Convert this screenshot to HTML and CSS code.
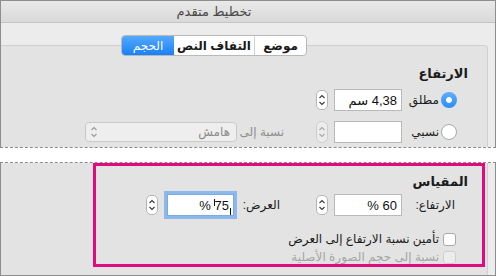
FILE: index.html
```html
<!DOCTYPE html>
<html lang="ar" dir="rtl">
<head>
<meta charset="utf-8">
<title>تخطيط متقدم</title>
<link rel="stylesheet" href="styles.css">
</head>
<body>
<div class="win-top">
  <div class="titlebar"><span class="title">تخطيط متقدم</span></div>
  <div class="content">
    <div class="tabs-wrap">
      <div class="tabs">
        <span class="tab tab-pos">موضع</span>
        <span class="tab tab-wrap">التفاف النص</span>
        <span class="tab tab-size active">الحجم</span>
      </div>
    </div>
    <div class="panel panel-top">
      <div class="heading">الارتفاع</div>
      <div class="row">
        <span class="radio on"></span>
        <span class="lbl">مطلق</span>
        <span class="field">4,38 سم</span>
        <span class="stepper"><svg width="12" height="20" viewBox="0 0 12 20"><rect x="0.5" y="0.5" width="11" height="19" rx="4.5" fill="#fff" stroke="#b5b5b5"/><path d="M3.5 8 L6 5.5 L8.5 8 M3.5 12 L6 14.5 L8.5 12" fill="none" stroke="#3a3a3a" stroke-width="1.1"/></svg></span>
      </div>
      <div class="row">
        <span class="radio"></span>
        <span class="lbl">نسبي</span>
        <span class="field"></span>
        <span class="stepper"><svg width="12" height="22" viewBox="0 0 12 22"><rect x="0.5" y="0.5" width="11" height="21" rx="5" fill="#ececec" stroke="#cdcdcd"/><path d="M3.5 9 L6 6.5 L8.5 9 M3.5 13 L6 15.5 L8.5 13" fill="none" stroke="#a8a8a8" stroke-width="1.1"/></svg></span>
        <span class="rel">نسبة إلى</span>
        <span class="select"><span class="sel-text">هامش</span><svg width="8" height="12" viewBox="0 0 8 12"><path d="M1.5 4 L4 1.5 L6.5 4 M1.5 8 L4 10.5 L6.5 8" fill="none" stroke="#9a9a9a" stroke-width="1.1"/></svg></span>
      </div>
    </div>
  </div>
</div>
<div class="tear"></div>
<div class="win-bottom">
  <div class="panel panel-bottom">
    <div class="heading heading-2">المقياس</div>
    <div class="row row-scale">
      <span class="lbl lbl-wide">الارتفاع:</span>
      <span class="field">60 %</span>
      <span class="stepper"><svg width="12" height="20" viewBox="0 0 12 20"><rect x="0.5" y="0.5" width="11" height="19" rx="4.5" fill="#fff" stroke="#b5b5b5"/><path d="M3.5 8 L6 5.5 L8.5 8 M3.5 12 L6 14.5 L8.5 12" fill="none" stroke="#3a3a3a" stroke-width="1.1"/></svg></span>
      <span class="lbl lbl-w">العرض:</span>
      <span class="field focus"><span class="val"><span class="num">75</span> %</span></span>
      <span class="stepper"><svg width="12" height="20" viewBox="0 0 12 20"><rect x="0.5" y="0.5" width="11" height="19" rx="4.5" fill="#fff" stroke="#b5b5b5"/><path d="M3.5 8 L6 5.5 L8.5 8 M3.5 12 L6 14.5 L8.5 12" fill="none" stroke="#3a3a3a" stroke-width="1.1"/></svg></span>
    </div>
    <div class="check-row">
      <span class="checkbox"></span>
      <span class="check-lbl">تأمين نسبة الارتفاع إلى العرض</span>
    </div>
    <div class="check-row disabled">
      <span class="checkbox"></span>
      <span class="check-lbl">نسبة إلى حجم الصورة الأصلية</span>
    </div>
  </div>
  <div class="highlight"></div>
</div>
</body>
</html>
```
FILE: styles.css
```css
* { box-sizing: border-box; }
html, body { margin: 0; padding: 0; }
body {
  width: 496px;
  height: 276px;
  overflow: hidden;
  background: #ececec;
  font-family: "Liberation Sans", "DejaVu Sans", sans-serif;
  font-size: 12px;
  color: #1b1b1b;
}

.win-top {
  height: 147px;
  border: 1px solid #8e8e8e;
  border-bottom: 0;
  background: #ececec;
  overflow: hidden;
}
.titlebar {
  height: 22px;
  border-bottom: 1px solid #c4c4c4;
  background: linear-gradient(#e9e9e9, #d9d9d9);
  display: flex;
  align-items: center;
  justify-content: center;
  padding-right: 68px;
  color: #4a4a4a;
  font-size: 13px;
}
.content { padding-top: 12px; }
.tabs-wrap {
  display: flex;
  justify-content: center;
  padding-right: 68px;
  position: relative;
  z-index: 1;
  margin-bottom: -11px;
}
.tabs {
  display: flex;
  height: 21px;
  border: 1px solid #b8b8b8;
  border-radius: 4px;
  background: #fff;
  overflow: hidden;
}
.tab {
  display: flex;
  align-items: center;
  justify-content: center;
  font-weight: bold;
  font-size: 12px;
  color: #1a1a1a;
}
.tab-pos { width: 52px; border-left: 1px solid #d3d3d3; }
.tab-wrap { width: 80px; }
.tab-size { width: 52px; }
.tab.active {
  background: linear-gradient(#55a9fd, #1b80f8);
  color: #fff;
  font-weight: normal;
}

.panel {
  background: #e3e3e3;
  border-right: 1px solid #d0d0d0;
  margin-right: 7px;
  padding-right: 19px;
}
.panel-top {
  border-top: 1px solid #d0d0d0;
  border-top-right-radius: 4px;
  height: 110px;
}
.heading {
  font-weight: bold;
  font-size: 13px;
  line-height: 16px;
  margin-top: 20px;
}
.row {
  display: flex;
  align-items: center;
  height: 22px;
  margin-right: 11px;
}
.panel-top .row { margin-top: 7px; }
.panel-top .row + .row { margin-top: 10px; }

.radio {
  width: 16px;
  height: 16px;
  border-radius: 50%;
  border: 1px solid #a9a9a9;
  background: #fff;
  flex: none;
}
.radio.on {
  border: 0;
  background: radial-gradient(circle, #fff 0 2.6px, transparent 3.2px), linear-gradient(#5eaefd, #2b8cf9);
}
.lbl {
  width: 39px;
  padding-right: 2px;
  flex: none;
}
.field {
  width: 68px;
  height: 22px;
  border: 1px solid #b9b9b9;
  background: #fff;
  display: flex;
  align-items: center;
  padding: 0 4px;
  font-size: 13px;
  color: #111;
  flex: none;
}
.stepper {
  margin-right: 6px;
  display: flex;
  flex: none;
}
.rel {
  margin-right: 32px;
  color: #8e8e8e;
  width: 47px;
  flex: none;
}
.select {
  width: 152px;
  height: 20px;
  border: 1px solid #c9c9c9;
  border-radius: 4px;
  background: #eeeeee;
  display: flex;
  align-items: center;
  justify-content: space-between;
  padding: 0 6px 0 4px;
  color: #8a8a8a;
  flex: none;
}

.tear {
  height: 16px;
  background: #fff;
  border-top: 1px dashed #8a8a8a;
  border-bottom: 1px dashed #8a8a8a;
}

.win-bottom {
  position: relative;
  height: 113px;
  border: 1px solid #8e8e8e;
  border-top: 0;
  background: #ececec;
  overflow: hidden;
}
.panel-bottom {
  height: 112px;
  padding-top: 11px;
}
.heading-2 { margin-top: 0; }
.row-scale { margin-top: 4px; margin-right: 11px; }
.lbl-wide { width: 55px; }
.lbl-w { width: 48px; margin-right: 34px; }
.field.focus {
  width: 67px;
  box-shadow: 0 0 0 3px #8cb8ec;
  border-color: #7aa9e4;
  margin-left: 3px;
}
.val { white-space: pre; }
.num { position: relative; }
.num::before {
  content: "";
  position: absolute;
  left: -1px;
  top: 1px;
  width: 1px;
  height: 7px;
  background: #111;
}
.num::after {
  content: "";
  position: absolute;
  right: -2px;
  bottom: -2px;
  width: 1px;
  height: 7px;
  background: #111;
}

.check-row {
  display: flex;
  align-items: center;
  height: 16px;
  margin-right: 12px;
  margin-top: 15px;
}
.check-row + .check-row { margin-top: 2px; }
.checkbox {
  width: 13px;
  height: 13px;
  border: 1px solid #a9a9a9;
  border-radius: 3px;
  background: #fff;
  flex: none;
}
.check-lbl { margin-right: 4px; }
.check-row.disabled { color: #a5a5a5; }
.check-row.disabled .checkbox { border-color: #cfcfcf; background: #ececec; }

.highlight {
  position: absolute;
  left: 92px;
  top: 0;
  width: 392px;
  height: 104px;
  border: 3px solid #e3097f;
  pointer-events: none;
}
```
